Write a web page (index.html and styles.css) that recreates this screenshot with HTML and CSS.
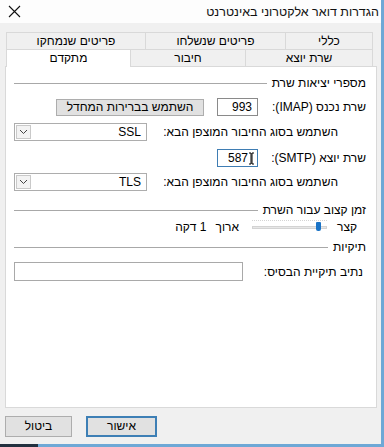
FILE: index.html
```html
<!DOCTYPE html>
<html lang="he">
<head>
<meta charset="UTF-8">
<title>הגדרות דואר אלקטרוני באינטרנט</title>
<link rel="stylesheet" href="styles.css">
</head>
<body>
<div class="window">
	<div class="titlebar">
		<svg class="close" width="13" height="13" viewBox="0 0 13 13"><path d="M1 1L12 12M12 1L1 12" stroke="#111" stroke-width="1.1" fill="none"/></svg>
		<div class="title" dir="rtl">הגדרות דואר אלקטרוני באינטרנט</div>
	</div>

	<div class="tabs" dir="rtl">
		<div class="tab-row back">
			<div class="tab t1">כללי</div>
			<div class="tab t2">פריטים שנשלחו</div>
			<div class="tab t3">פריטים שנמחקו</div>
		</div>
		<div class="tab-row front">
			<div class="tab t4">שרת יוצא</div>
			<div class="tab t5">חיבור</div>
			<div class="tab t6 active">מתקדם</div>
		</div>
	</div>

	<div class="panel" dir="rtl">
		<div class="group-head">
			<span>מספרי יציאות שרת</span>
			<div class="rule"></div>
		</div>

		<div class="row r-imap">
			<div class="port-label">שרת נכנס (IMAP):</div>
			<div class="field port">993</div>
			<div class="btn default-btn">השתמש בברירות המחדל</div>
		</div>

		<div class="row r-enc r-ssl">
			<div class="enc-label">השתמש בסוג החיבור המוצפן הבא:</div>
			<div class="select">
				<span>SSL</span>
				<div class="arrow"><svg width="9" height="6" viewBox="0 0 9 6"><path d="M1 1L4.5 4.5L8 1" stroke="#444" fill="none"/></svg></div>
			</div>
		</div>

		<div class="row r-smtp">
			<div class="port-label">שרת יוצא (SMTP):</div>
			<div class="field port focused"><svg class="ibeam" width="5" height="13" viewBox="0 0 5 13"><path d="M0 1H2V12H0M5 1H3V12H5" stroke="#000" fill="none"/></svg><span>587</span></div>
		</div>

		<div class="row r-enc r-tls">
			<div class="enc-label">השתמש בסוג החיבור המוצפן הבא:</div>
			<div class="select">
				<span>TLS</span>
				<div class="arrow"><svg width="9" height="6" viewBox="0 0 9 6"><path d="M1 1L4.5 4.5L8 1" stroke="#444" fill="none"/></svg></div>
			</div>
		</div>

		<div class="group-head g-timeout">
			<span>זמן קצוב עבור השרת</span>
			<div class="rule"></div>
		</div>

		<div class="row r-slider">
			<span>קצר</span>
			<div class="slider">
				<div class="track"></div>
				<div class="thumb"></div>
			</div>
			<span class="long">ארוך</span>
			<span class="minute">1 דקה</span>
		</div>

		<div class="group-head g-folders">
			<span>תיקיות</span>
			<div class="rule"></div>
		</div>

		<div class="row r-folder">
			<div class="folder-label">נתיב תיקיית הבסיס:</div>
			<div class="field folder"></div>
		</div>
	</div>

	<div class="actions">
		<div class="btn cancel">ביטול</div>
		<div class="btn ok">אישור</div>
	</div>

	<div class="frame-bottom"><div class="taskbar"></div></div>
</div>
</body>
</html>
```

FILE: styles.css
```css
* {
	margin: 0;
	padding: 0;
	box-sizing: border-box;
}

body {
	width: 384px;
	height: 447px;
	overflow: hidden;
	background: #f0f0f0;
	font-family: "Liberation Sans", "DejaVu Sans", sans-serif;
	font-size: 12px;
	color: #000;
}

.window {
	height: 447px;
	border-right: 3px solid #6ea8d6;
	display: flex;
	flex-direction: column;
}

/* title bar */
.titlebar {
	height: 23px;
	background: #fdfdfd;
	display: flex;
	align-items: center;
	justify-content: space-between;
	padding: 0 2px 0 8px;
}

.title {
	font-size: 12.5px;
	color: #111;
}

/* tabs */
.tabs {
	margin-top: 9px;
	padding: 0 8px 0 6px;
}

.tab-row {
	display: flex;
	height: 17px;
	align-items: flex-start;
}

.tab {
	height: 17px;
	line-height: 16px;
	text-align: center;
	border-top: 1px solid #d9d9d9;
	border-left: 1px solid #d9d9d9;
	background: #f0f0f0;
}

.tab-row .tab:first-child {
	border-right: 1px solid #d9d9d9;
}

.t1 { width: 88px; }
.t2 { width: 140px; }
.t3 { width: 139px; }
.t4 { width: 128px; }
.t5 { width: 115px; }
.t6 { width: 124px; }

.tab.active {
	position: relative;
	z-index: 1;
	height: 18px;
	background: #fff;
}

/* panel */
.panel {
	margin: 0 4px 0 5px;
	height: 342px;
	background: #fff;
	border: 1px solid #d9d9d9;
	padding: 9px 10px 0 8px;
}

.group-head {
	display: flex;
	align-items: center;
	gap: 5px;
	height: 14px;
	line-height: 14px;
}

.group-head .rule {
	flex: 1;
	height: 1px;
	background: #a8a8a8;
}

.row {
	display: flex;
	align-items: center;
}

.field {
	background: #fff;
	border: 1px solid #8a8a8a;
	display: flex;
	align-items: center;
	justify-content: flex-start;
}

.port-label {
	width: 108px;
}

.port {
	width: 41px;
	height: 18px;
	padding-right: 5px;
}

.port.focused {
	border-color: #3f7db3;
	padding-right: 3px;
	gap: 1px;
}

.ibeam {
	margin-top: 1px;
}

.btn {
	background: #e1e1e1;
	border: 1px solid #adadad;
	text-align: center;
}

.default-btn {
	width: 148px;
	height: 17px;
	line-height: 15px;
	margin-right: 13px;
}

.r-imap {
	margin-top: 8px;
	height: 18px;
}

.r-enc {
	justify-content: space-between;
	padding-right: 28px;
	height: 18px;
}

.r-ssl { margin-top: 7px; }

.r-smtp {
	margin-top: 8px;
	height: 18px;
}

.r-tls { margin-top: 6px; }

.select {
	width: 133px;
	height: 18px;
	border: 1px solid #adadad;
	display: flex;
	align-items: center;
	justify-content: space-between;
	padding: 0 5px 0 1px;
}

.arrow {
	width: 15px;
	height: 14px;
	border: 1px solid #c9c9c9;
	background: #f3f3f3;
	display: flex;
	align-items: center;
	justify-content: center;
}

.g-timeout { margin-top: 12px; }

.r-slider {
	margin-top: 3px;
	height: 14px;
	padding-right: 9px;
}

.slider {
	position: relative;
	width: 75px;
	height: 14px;
	margin-right: 10px;
	border-top: 1px dotted #d4d4d4;
}

.track {
	margin-top: 5px;
	height: 3px;
	background: #e7e7e7;
	border: 1px solid #d3d3d3;
}

.thumb {
	position: absolute;
	left: 64px;
	top: 1px;
	width: 5px;
	height: 9px;
	background: #1a73c6;
	border-radius: 1px 1px 2px 2px;
}

.long { margin-right: 13px; }
.minute { margin-right: 9px; }

.g-folders { margin-top: 6px; }

.r-folder {
	margin-top: 8px;
	justify-content: space-between;
	padding-right: 3px;
	height: 19px;
}

.folder {
	width: 229px;
	height: 19px;
	border-color: #a9a9a9;
}

/* bottom buttons */
.actions {
	display: flex;
	gap: 14px;
	padding-left: 5px;
	margin-top: 8px;
}

.actions .btn {
	height: 21px;
	line-height: 19px;
}

.cancel {
	width: 67px;
}

.ok {
	width: 71px;
	border: 2px solid #3d7fb5;
	line-height: 17px !important;
}

.frame-bottom {
	margin-top: auto;
	height: 3px;
	background: #6ea8d6;
}

.taskbar {
	width: 38px;
	height: 3px;
	background: #22303f;
}
```
